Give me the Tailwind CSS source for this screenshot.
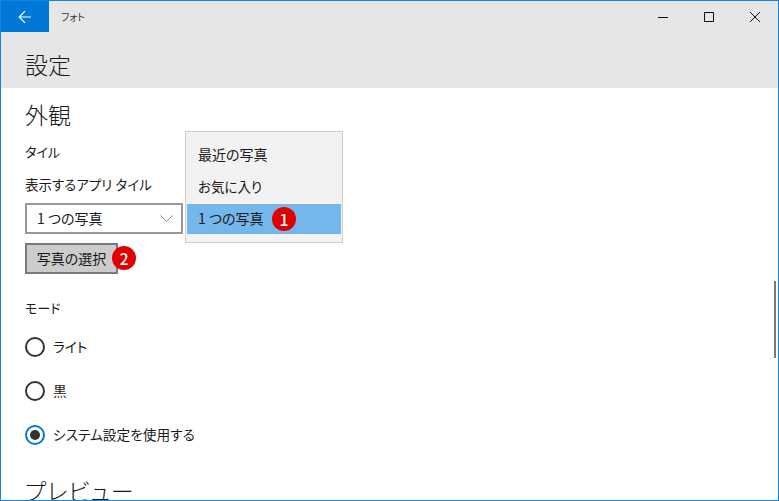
<!DOCTYPE html>
<html lang="ja">
<head>
  <meta charset="UTF-8">
  <title>フォト</title>
  <script src="https://cdn.jsdelivr.net/npm/@tailwindcss/browser@4"></script>
</head>
<body class="w-[779px] h-[501px] overflow-hidden bg-white text-[#1a1a1a] font-['Noto_Sans_CJK_JP',sans-serif] [font-feature-settings:'palt']">
  <div class="relative w-full h-full overflow-hidden border border-[#1883d7]">
    <!-- title bar -->
    <header class="bg-[#e6e6e6] h-[87px]">
      <div class="flex items-center h-[31px]">
        <div class="flex items-center justify-center w-[48px] h-full bg-[#0078d7]">
          <svg width="14" height="14" viewBox="0 0 14 14" fill="none" stroke="#fff" stroke-width="1.2"><path d="M13 7H1.5M7 1.2 1.2 7 7 12.8"/></svg>
        </div>
        <span class="ml-[12px] text-[10px] text-[#333]">フォト</span>
        <div class="flex items-center ml-auto h-full">
          <div class="flex items-center justify-center w-[46px] h-full"><svg width="10" height="10" viewBox="0 0 10 10" stroke="#111"><path d="M0 5.5H10"/></svg></div>
          <div class="flex items-center justify-center w-[46px] h-full"><svg width="10" height="10" viewBox="0 0 10 10" fill="none" stroke="#111"><path d="M.5.5h9v9h-9z"/></svg></div>
          <div class="flex items-center justify-center w-[46px] h-full"><svg width="10" height="10" viewBox="0 0 10 10" stroke="#111"><path d="M0 0 10 10M10 0 0 10"/></svg></div>
        </div>
      </div>
      <h1 class="ml-[24px] mt-[16px] text-[23px] leading-[32px] font-light">設定</h1>
    </header>

    <main class="pl-[24px]">
      <h2 class="mt-[9px] text-[23px] leading-[34px] font-light">外観</h2>
      <p class="mt-[11px] text-[13px] leading-[20px]">タイル</p>
      <p class="mt-[12px] text-[13.5px] leading-[20px]">表示するアプリ タイル</p>
      <div class="flex items-center justify-between mt-[9px] w-[158px] h-[31px] border-2 border-[#999] pl-[10px] pr-[8px] text-[14px]">
        <span class="pb-[1px]">1 つの写真</span>
        <svg width="13" height="7" viewBox="0 0 13 7" fill="none" stroke="#888"><path d="M.5.5 6.5 6.5 12.5.5"/></svg>
      </div>
      <div class="relative mt-[9px] flex items-center justify-center w-[93px] h-[31px] bg-[#cccccc] border-2 border-[#7a7a7a] text-[14px]">
        写真の選択
        <span class="absolute left-[85px] top-[1px] flex items-center justify-center w-[24px] h-[24px] rounded-full bg-[#e00000] text-white text-[16px] font-medium">2</span>
      </div>

      <p class="mt-[24px] text-[13px] leading-[20px]">モード</p>
      <div class="mt-[19px] flex flex-col gap-[24px] text-[13.7px]">
        <label class="flex items-center gap-[8px] h-[20px]">
          <span class="w-[20px] h-[20px] rounded-full border-2 border-[#333]"></span><span class="pb-[2px]">ライト</span>
        </label>
        <label class="flex items-center gap-[8px] h-[20px]">
          <span class="w-[20px] h-[20px] rounded-full border-2 border-[#333]"></span><span class="pb-[2px]">黒</span>
        </label>
        <label class="flex items-center gap-[8px] h-[20px]">
          <span class="flex items-center justify-center w-[20px] h-[20px] rounded-full border-2 border-[#0078d7]"><span class="w-[10px] h-[10px] rounded-full bg-[#333]"></span></span><span class="pb-[2px]">システム設定を使用する</span>
        </label>
      </div>
      <h2 class="mt-[28px] text-[23px] leading-[34px] font-light tracking-[1px]">プレビュー</h2>
    </main>

    <!-- dropdown open over the page -->
    <div class="absolute left-[184px] top-[130px] w-[158px] h-[112px] bg-[#f2f2f2] border border-[#cccccc] pt-[8px] px-px text-[14px]">
      <div class="flex items-center h-[30px] px-[11px] pb-[2px]">最近の写真</div>
      <div class="flex items-center h-[34px] px-[11px] pb-[2px] text-[13.5px]">お気に入り</div>
      <div class="relative flex items-center h-[30px] px-[11px] pb-[2px] bg-[#74b7ed]">
        1 つの写真
        <span class="absolute left-[85px] top-[3px] flex items-center justify-center w-[24px] h-[24px] rounded-full bg-[#e00000] text-white text-[16px] font-medium">1</span>
      </div>
    </div>

    <!-- scrollbar -->
    <div class="absolute right-[2px] top-[280px] w-[2px] h-[77px] bg-[#7a7a7a]"></div>
  </div>
</body>
</html>
